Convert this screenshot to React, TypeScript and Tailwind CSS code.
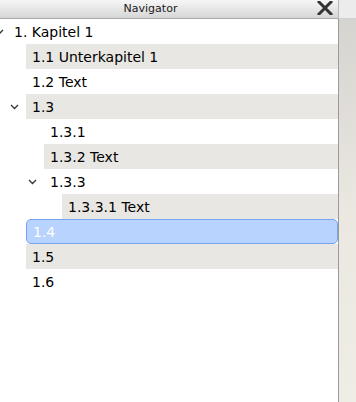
import React from "react";

type Row = { label: string; level: number; shaded: boolean; chevron?: boolean; selected?: boolean };

const rows: Row[] = [
  { label: "1. Kapitel 1", level: 0, shaded: false, chevron: true },
  { label: "1.1 Unterkapitel 1", level: 1, shaded: true },
  { label: "1.2 Text", level: 1, shaded: false },
  { label: "1.3", level: 1, shaded: true, chevron: true },
  { label: "1.3.1", level: 2, shaded: false },
  { label: "1.3.2 Text", level: 2, shaded: true },
  { label: "1.3.3", level: 2, shaded: false, chevron: true },
  { label: "1.3.3.1 Text", level: 3, shaded: true },
  { label: "1.4", level: 1, shaded: false, selected: true },
  { label: "1.5", level: 1, shaded: true },
  { label: "1.6", level: 1, shaded: false },
];

const indentClass = ["ml-[8px]", "ml-[26px]", "ml-[44px]", "ml-[62px]"];

function Chevron({ top }: { top: boolean }) {
  return (
    <svg
      width="9"
      height="6"
      viewBox="0 0 9 6"
      className={"absolute top-[10px] " + (top ? "-left-[13px]" : "-left-[16px]")}
    >
      <path d="M1 1 L4.5 4.5 L8 1" fill="none" stroke="#333" strokeWidth="1.3" />
    </svg>
  );
}

export default function App() {
  return (
    <div className="w-[356px] h-[402px] flex bg-white overflow-hidden" style={{ fontFamily: '"DejaVu Sans", sans-serif' }}>
      <div className="w-[338px] flex flex-col">
        <div className="h-[19px] flex border-b border-[#a8a8a8] bg-gradient-to-b from-[#f6f6f6] to-[#d6d6d6]">
          <div className="flex-1 flex items-center justify-center text-[11px] text-[#1a1a1a] leading-none pb-[1px]">Navigator</div>
          <div className="w-[37px] flex items-start pt-[1px] pl-[16px]">
            <svg width="16" height="14" viewBox="0 0 16 14">
              <path d="M2 1 L14 13 M14 1 L2 13" stroke="#333" strokeWidth="3" strokeLinecap="square" />
            </svg>
          </div>
        </div>
        <div className="flex flex-col">
          {rows.map((r, i) => (
            <div key={i} className="h-[25px] flex">
              <div
                className={
                  "relative flex-1 flex items-center pl-[6px] pt-[1px] text-[14px] leading-none " +
                  indentClass[r.level] +
                  (r.selected
                    ? " bg-[#b8d3fd] border border-[#76a5ef] rounded-[5px] text-white pl-[5px]"
                    : r.shaded
                    ? " bg-[#e8e7e3] text-black"
                    : " text-black")
                }
              >
                {r.chevron && <Chevron top={r.level === 0} />}
                {r.label}
              </div>
            </div>
          ))}
        </div>
      </div>
      <div className="w-[1px] flex flex-col">
        <div className="h-[19px] bg-[#b8b8b8]" />
        <div className="flex-1 bg-[#9a9a9a]" />
      </div>
      <div className="flex-1 flex flex-col">
        <div className="h-[19px] bg-[#ececec] border-b border-[#d0d0d0]" />
        <div className="flex-1 bg-gradient-to-b from-[#d6d4d0] via-[#ebe7e1] to-[#f0ece6]" />
      </div>
    </div>
  );
}
